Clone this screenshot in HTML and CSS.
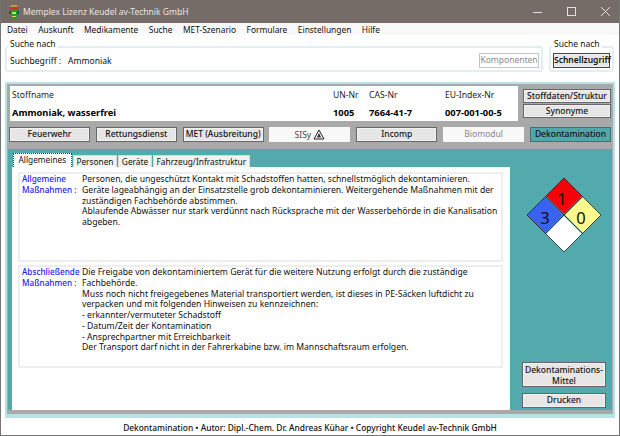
FILE: index.html
```html
<!DOCTYPE html>
<html lang="de">
<head>
    <meta charset="UTF-8">
    <title>Memplex</title>
    <link rel="stylesheet" href="styles.css">
</head>
<body>
<div class="window">
    <div class="titlebar">
        <svg class="app-icon" width="14" height="16" viewBox="0 0 14 16">
            <path d="M4 1l6 0 1 2-8 0z" fill="#b9a13a"/>
            <rect x="3" y="3" width="8" height="3" fill="#c8332b"/>
            <rect x="4" y="6" width="6" height="9" fill="#1f9a3a"/>
            <rect x="5" y="8" width="4" height="2" fill="#d9e04a"/>
            <rect x="5" y="12" width="4" height="1" fill="#d9e04a"/>
            <rect x="2" y="7" width="2" height="3" fill="#14602a"/>
            <rect x="10" y="7" width="2" height="3" fill="#14602a"/>
        </svg>
        <span class="title-text">Memplex Lizenz Keudel av-Technik GmbH</span>
        <div class="win-controls">
            <svg width="12" height="12" viewBox="0 0 12 12"><path d="M1 6.500h9" stroke="#e4e0de" fill="none"/></svg>
            <svg width="12" height="12" viewBox="0 0 12 12"><rect x="1.500" y="1.500" width="8" height="8" stroke="#e4e0de" fill="none"/></svg>
            <svg width="12" height="12" viewBox="0 0 12 12"><path d="M1 1l9 9M10 1l-9 9" stroke="#e4e0de" fill="none"/></svg>
        </div>
    </div>
    <div class="menubar">
        <span>Datei</span><span>Auskunft</span><span>Medikamente</span><span>Suche</span><span>MET-Szenario</span><span>Formulare</span><span>Einstellungen</span><span>Hilfe</span>
    </div>
    <div class="search-row">
        <div class="group group-main">
            <div class="group-title">Suche nach</div>
            <div class="group-body">
                <span class="search-label">Suchbegriff :</span>
                <span class="search-value">Ammoniak</span>
                <button class="btn btn-disabled">Komponenten</button>
            </div>
        </div>
        <div class="group group-quick">
            <div class="group-title">Suche nach</div>
            <div class="group-body">
                <button class="btn btn-quick">Schnellzugriff</button>
            </div>
        </div>
    </div>
    <div class="main-panel">
        <div class="info-row">
            <div class="info-box">
                <div class="info-col col-name"><span>Stoffname</span><b>Ammoniak, wasserfrei</b></div>
                <div class="info-col col-un"><span>UN-Nr</span><b>1005</b></div>
                <div class="info-col col-cas"><span>CAS-Nr</span><b>7664-41-7</b></div>
                <div class="info-col col-eu"><span>EU-Index-Nr</span><b>007-001-00-5</b></div>
            </div>
            <div class="info-buttons">
                <button class="btn btn-side">Stoffdaten/Struktur</button>
                <button class="btn btn-side">Synonyme</button>
            </div>
        </div>
        <div class="action-row">
            <button class="btn btn-action">Feuerwehr</button>
            <button class="btn btn-action">Rettungsdienst</button>
            <button class="btn btn-action">MET (Ausbreitung)</button>
            <button class="btn btn-action btn-flat btn-sisy">SISy
                <svg width="12" height="11" viewBox="0 0 12 11"><path d="M6 1L1 10h10z" fill="none" stroke="#222"/><path d="M6 4l-2.200 4.500h4.400z" fill="#333"/></svg>
            </button>
            <button class="btn btn-action">Incomp</button>
            <button class="btn btn-action btn-flat btn-muted">Biomodul</button>
            <button class="btn btn-action btn-active">Dekontamination</button>
        </div>
        <div class="teal-panel">
            <div class="tab-area">
                <div class="tabs">
                    <span class="tab tab-active">Allgemeines</span>
                    <span class="tab">Personen</span>
                    <span class="tab">Geräte</span>
                    <span class="tab">Fahrzeug/Infrastruktur</span>
                </div>
                <div class="tab-page">
                    <div class="section section-top">
                        <div class="section-label">Allgemeine<br>Maßnahmen :</div>
                        <div class="section-text">Personen, die ungeschützt Kontakt mit Schadstoffen hatten, schnellstmöglich dekontaminieren.<br>
Geräte lageabhängig an der Einsatzstelle grob dekontaminieren. Weitergehende Maßnahmen mit der<br>
zuständigen Fachbehörde abstimmen.<br>
Ablaufende Abwässer nur stark verdünnt nach Rücksprache mit der Wasserbehörde in die Kanalisation<br>
abgeben.</div>
                    </div>
                    <div class="section section-bottom">
                        <div class="section-label">Abschließende<br>Maßnahmen :</div>
                        <div class="section-text">Die Freigabe von dekontaminiertem Gerät für die weitere Nutzung erfolgt durch die zuständige<br>
Fachbehörde.<br>
Muss noch nicht freigegebenes Material transportiert werden, ist dieses in PE-Säcken luftdicht zu<br>
verpacken und mit folgenden Hinweisen zu kennzeichnen:<br>
- erkannter/vermuteter Schadstoff<br>
- Datum/Zeit der Kontamination<br>
- Ansprechpartner mit Erreichbarkeit<br>
Der Transport darf nicht in der Fahrerkabine bzw. im Mannschaftsraum erfolgen.</div>
                    </div>
                </div>
            </div>
            <div class="side-col">
                <svg class="diamond" width="76" height="76" viewBox="0 0 76 76">
                    <path d="M38 1L56 19 38 37 20 19z" fill="#f8000a"/>
                    <path d="M19 20L37 38 19 56 1 38z" fill="#3a62f0"/>
                    <path d="M57 20L75 38 57 56 39 38z" fill="#fdf98c"/>
                    <path d="M38 39L56 57 38 75 20 57z" fill="#fff"/>
                    <path d="M38 1L75 38 38 75 1 38zM19.500 19.500L56.500 56.500M56.500 19.500L19.500 56.500" fill="none" stroke="#222" stroke-width="0.8"/>
                    <text x="36" y="28" class="dia-num">1</text>
                    <text x="19" y="47" class="dia-num">3</text>
                    <text x="55" y="47" class="dia-num">0</text>
                </svg>
                <div class="side-buttons">
                    <button class="btn btn-tall">Dekontaminations-<br>Mittel</button>
                    <button class="btn btn-print">Drucken</button>
                </div>
            </div>
        </div>
    </div>
    <div class="statusbar">Dekontamination • Autor: Dipl.-Chem. Dr. Andreas Kühar • Copyright Keudel av-Technik GmbH</div>
</div>
</body>
</html>
```

FILE: styles.css
```css
* {
    box-sizing: border-box;
}
body {
    margin: 0;
    background-color: #ffffff;
    font-family: "Noto Sans", "Open Sans", sans-serif;
    font-size: 8.600px;
    color: #111111;
}
button {
    font-family: inherit;
}
.window {
    width: 620px;
    height: 436px;
    display: flex;
    flex-direction: column;
    border: 1px solid #757575;
    border-top: none;
    background-color: #ffffff;
    overflow: hidden;
}
.titlebar {
    height: 23px;
    flex: none;
    background-color: #756c68;
    color: #e8e4e2;
    display: flex;
    align-items: center;
    padding-left: 6px;
    font-size: 8.500px;
}
.app-icon {
    margin-right: 2px;
}
.title-text {
    flex-grow: 1;
}
.win-controls {
    display: flex;
    gap: 22px;
    padding-right: 7px;
}
.menubar {
    height: 12px;
    flex: none;
    background-color: #f9f9f9;
    display: flex;
    align-items: center;
    gap: 10.500px;
    padding-left: 6px;
    font-size: 8.400px;
}
.search-row {
    height: 47px;
    flex: none;
    display: flex;
    gap: 6px;
    padding: 11px 5px 0 4px;
}
.group {
    height: 26px;
    border: 2px solid #e2eef0;
    border-radius: 3px;
}
.group-title {
    width: fit-content;
    margin: -10px 0 0 1px;
    padding: 0 2px;
    background-color: #ffffff;
    line-height: 12px;
    font-size: 8.500px;
}
.group-main {
    width: 538px;
}
.group-quick {
    width: 65px;
}
.group-body {
    display: flex;
    align-items: center;
    height: 15px;
    margin-top: 3px;
    padding-left: 3px;
}
.group-quick .group-body {
    padding-left: 2px;
}
.search-label {
    width: 58px;
}
.search-value {
    flex-grow: 1;
}
.btn {
    height: 15px;
    padding: 0;
    background-color: #e6e6e6;
    border: 1px solid #666666;
    box-shadow: inset 0 0 0 1px #f2f2f2;
    color: #111111;
    font-size: 8.500px;
    line-height: 1;
    font-weight: 500;
    white-space: nowrap;
}
.btn-disabled {
    width: 60px;
    margin-right: 2px;
    background-color: #ffffff;
    border: 1px solid #c4c4c4;
    box-shadow: none;
    color: #8a8a8a;
    font-weight: normal;
}
.btn-quick {
    width: 57px;
    font-weight: 600;
    border-color: #444444;
}
.main-panel {
    height: 336px;
    flex: none;
    margin: 0 4px;
    background-color: #a9a9a9;
    border: solid #b9e2e6;
    border-width: 2px 2px 4px 2px;
    display: flex;
    flex-direction: column;
}
.info-row {
    display: flex;
    height: 35px;
    flex: none;
    margin: 2px 2px 0 3px;
    gap: 5px;
}
.info-box {
    width: 508px;
    background-color: #ffffff;
    display: flex;
    padding: 3px 0 0 2px;
}
.info-col {
    display: flex;
    flex-direction: column;
    gap: 5px;
    color: #222222;
}
.info-col b {
    font-size: 9.300px;
    color: #000000;
}
.col-name {
    width: 321px;
}
.col-un {
    width: 36px;
}
.col-cas {
    width: 76px;
}
.info-buttons {
    width: 88px;
    display: flex;
    flex-direction: column;
    padding-top: 3px;
    gap: 1px;
}
.btn-side {
    height: 14px;
    width: 88px;
}
.action-row {
    display: flex;
    justify-content: space-between;
    height: 15px;
    flex: none;
    margin: 6px 2px 0 2px;
}
.btn-action {
    width: 81px;
}
.btn-flat {
    background-color: #f8f8f8;
    border: none;
    box-shadow: none;
    font-weight: normal;
}
.btn-muted {
    color: #888888;
}
.btn-sisy {
    color: #444444;
}
.btn-sisy svg {
    vertical-align: -2px;
}
.btn-active {
    background-color: #4fa9ab;
    box-shadow: none;
    border-color: #4a6e70;
}
.teal-panel {
    height: 261px;
    flex: none;
    margin: 7px 1px 0 1px;
    background-color: #52aaad;
    display: flex;
    padding: 4px 0 0 4px;
}
.tab-area {
    width: 498px;
    display: flex;
    flex-direction: column;
}
.tabs {
    display: flex;
    align-items: flex-end;
    gap: 1px;
    height: 14px;
    flex: none;
    padding-left: 1px;
}
.tab {
    height: 12px;
    padding: 0 2.700px;
    background-color: #f2f2f2;
    font-size: 8.300px;
    line-height: 11px;
    border: 1px solid #d8d8d8;
    border-bottom: none;
}
.tab-active {
    height: 14px;
    padding: 0 4.500px;
    line-height: 12px;
    background-color: #ffffff;
    border: 1px dotted #444444;
    border-bottom: none;
}
.tab-page {
    flex-grow: 1;
    background-color: #ffffff;
    padding: 5px 0 0 6px;
}
.section {
    display: flex;
    width: 485px;
    border: 2px solid #eeeeee;
    padding-left: 2px;
    line-height: 10.750px;
    font-size: 8.650px;
}
.section-top {
    height: 90px;
    margin-bottom: 3px;
}
.section-bottom {
    height: 103px;
}
.section-label {
    width: 60px;
    flex: none;
    color: #1c1cf0;
    font-size: 8.200px;
    font-weight: 500;
}
.section-text {
    white-space: nowrap;
}
.side-col {
    flex-grow: 1;
    display: flex;
    flex-direction: column;
    align-items: center;
    padding-top: 24px;
    padding-bottom: 2px;
}
.diamond {
    margin-left: 6px;
}
.dia-num {
    font-size: 16.500px;
    text-anchor: middle;
    fill: #111111;
}
.side-buttons {
    margin-top: auto;
    display: flex;
    flex-direction: column;
    gap: 6px;
    margin-left: 6px;
}
.btn-tall {
    width: 84px;
    height: 25px;
    line-height: 11px;
}
.btn-print {
    width: 84px;
}
.statusbar {
    flex-grow: 1;
    text-align: center;
    line-height: 19px;
    font-size: 8.400px;
    font-weight: 500;
}
```
